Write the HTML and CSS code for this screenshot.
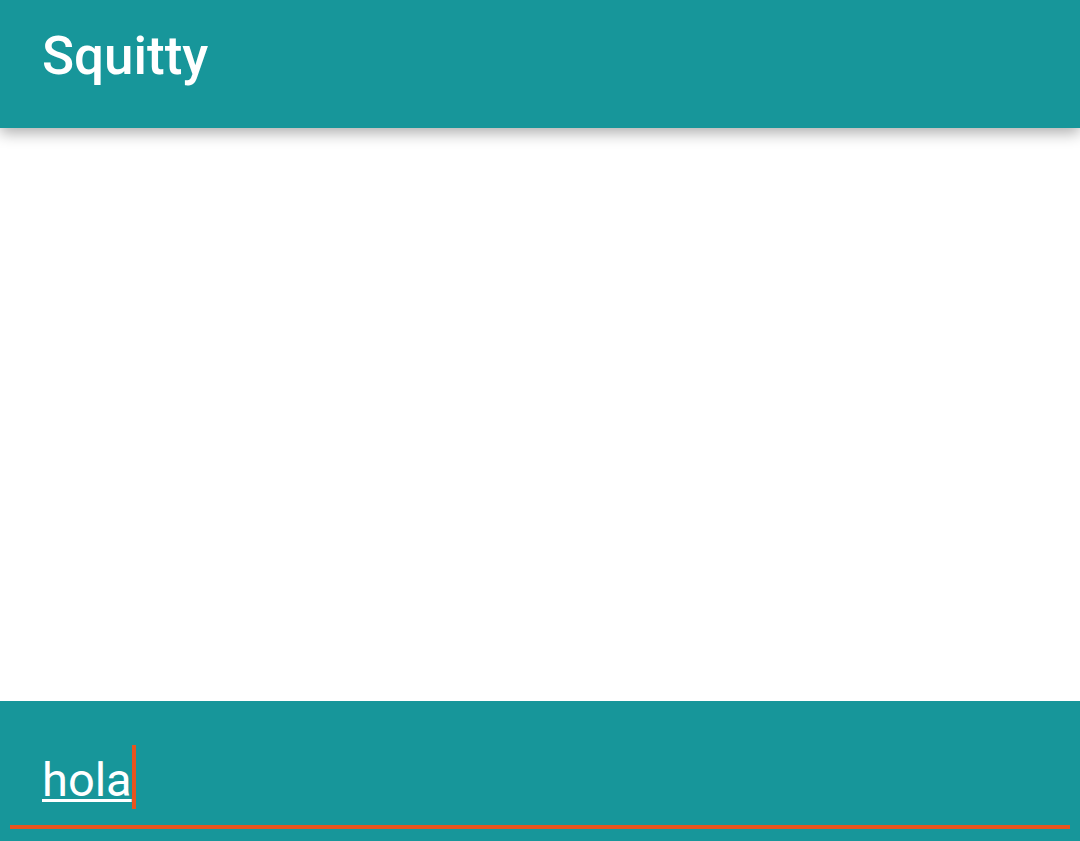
FILE: index.html
```html
<!DOCTYPE html>
<html>
<head>
<meta charset="utf-8">
<link rel="stylesheet" href="styles.css">
</head>
<body>
<div class="app">
  <header class="appbar">
    <h1 class="title">Squitty</h1>
  </header>
  <main class="content"></main>
  <footer class="composer">
    <div class="entry"><span class="typed">hola</span><span class="caret"></span></div>
    <div class="focus-line"></div>
  </footer>
</div>
</body>
</html>
```
FILE: styles.css
```css
html, body {
  margin: 0;
  padding: 0;
  height: 100%;
  background: #ffffff;
  font-family: Roboto, "Noto Sans", sans-serif;
}
.app {
  display: flex;
  flex-direction: column;
  height: 841px;
}
.appbar {
  flex: 0 0 128px;
  box-sizing: border-box;
  height: 128px;
  background: #17969a;
  padding: 26px 0 0 42px;
  box-shadow: 0 5px 14px rgba(0, 0, 0, 0.32);
  position: relative;
  z-index: 1;
}
.title {
  margin: 0;
  font-size: 53px;
  line-height: 60px;
  font-weight: 500;
  color: #ffffff;
}
.content {
  flex: 1;
  background: #ffffff;
}
.composer {
  flex: 0 0 140px;
  box-sizing: border-box;
  height: 140px;
  background: #17969a;
  padding-top: 44px;
}
.entry {
  padding-left: 42px;
  height: 64px;
  font-size: 47px;
  line-height: 64px;
  font-weight: 400;
  color: #ffffff;
  white-space: nowrap;
}
.typed {
  text-decoration: underline;
  text-decoration-thickness: 3px;
  text-underline-offset: 3px;
}
.caret {
  display: inline-block;
  width: 4px;
  height: 64px;
  background: #e8541e;
  vertical-align: -13px;
}
.focus-line {
  margin: 16px 10px 0 10px;
  height: 4px;
  background: #e8541e;
}
```
